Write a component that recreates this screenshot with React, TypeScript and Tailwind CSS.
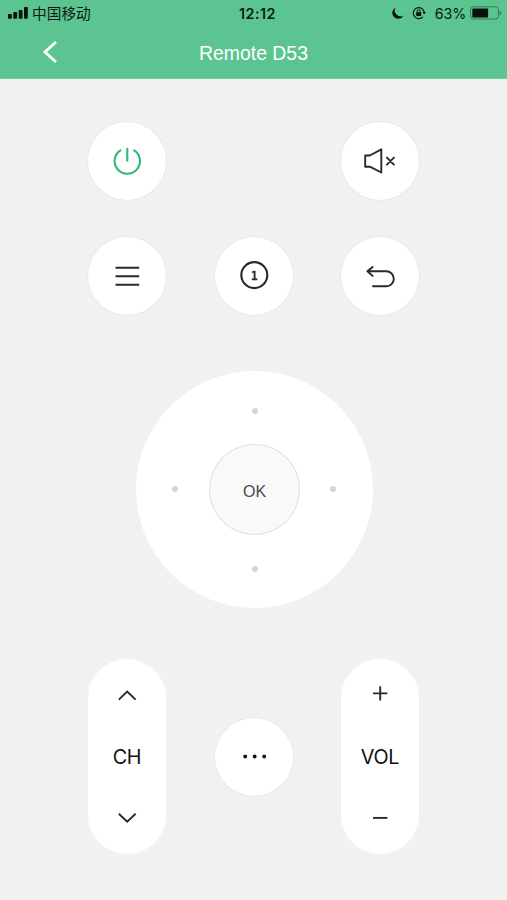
import React from 'react';

const ICON = {
  viewBox: '0 0 80 80',
  className: 'w-20 h-20 block',
  fill: 'none',
  stroke: '#29292b',
  strokeWidth: 1.9,
  strokeLinecap: 'round',
  strokeLinejoin: 'round',
} as const;

function RoundButton({ label, children }: { label: string; children: React.ReactNode }) {
  return (
    <button
      aria-label={label}
      className="w-20 h-20 shrink-0 rounded-full bg-white shadow-[inset_0_0_0_1px_#e7e7e7]"
    >
      {children}
    </button>
  );
}

function StatusBar() {
  return (
    <div className="grid grid-cols-3 items-center h-[27px] pl-2 pr-[5px] text-[#0b1a13]">
      <div className="flex items-center gap-1">
        <svg viewBox="0 0 20 14" className="w-5 h-[14px]" fill="#06130c">
          <rect x="0" y="8" width="3.8" height="4.8" rx="1" />
          <rect x="5.3" y="6" width="3.8" height="6.8" rx="1" />
          <rect x="10.7" y="4" width="3.8" height="8.8" rx="1" />
          <rect x="16" y="1" width="3.8" height="11.8" rx="1" />
        </svg>
        <span className="font-['Noto_Sans_CJK_SC',sans-serif] text-[14.7px] leading-none whitespace-nowrap">中国移动</span>
      </div>
      <span className="text-center pl-[5px] pt-[2px] font-['Inter',sans-serif] text-[14.3px] font-semibold leading-none tracking-[0.5px]">12:12</span>
      <div className="flex items-center justify-end">
        <svg viewBox="0 0 12 12" className="w-3 h-3 mr-2" fill="#06130c">
          <path d="M3.8.4A5.9 5.9 0 1 0 11.6 8.2 5.6 5.6 0 0 1 3.8.4Z" />
        </svg>
        <svg viewBox="0 0 14 14" className="w-[14px] h-[14px] mr-[9px]" fill="none" stroke="#06130c" strokeWidth="1.2">
          <path d="M10.8 10.9A5.5 5.5 0 1 1 12.2 6" />
          <path d="M10.5 6h3.3l-1.6 2.5Z" fill="#06130c" stroke="none" />
          <rect x="4.2" y="6.3" width="5" height="3.8" rx=".5" fill="#06130c" stroke="none" />
          <path d="M5.2 6.5V5.2a1.5 1.5 0 0 1 3 0v1.3" strokeWidth="1" />
        </svg>
        <span className="font-['Inter',sans-serif] text-[14.3px] leading-none pt-[2px] mr-1 tracking-[-0.2px]">63%</span>
        <svg viewBox="0 0 32 14" className="w-8 h-[14px] shrink-0" fill="none">
          <rect x=".6" y=".8" width="27.8" height="12.2" rx="3" stroke="#37785a" strokeWidth="1" />
          <rect x="2.3" y="2.4" width="15.8" height="9" rx="1" fill="#06130c" />
          <path d="M29.7 4.7c2.1.7 2.1 3.8 0 4.5Z" fill="#37785a" />
        </svg>
      </div>
    </div>
  );
}

function Header() {
  return (
    <header className="h-[79px] bg-[#5bc491] border-b border-[#75cba2]">
      <StatusBar />
      <div className="grid grid-cols-[80px_1fr_80px] items-center h-[51px] text-white">
        <button aria-label="Back" className="pl-[42px] pb-[2px]">
          <svg viewBox="0 0 16 24" className="w-4 h-6 block" fill="none" stroke="currentColor" strokeWidth="2.8">
            <path d="M14 2 2.9 12 14 22" />
          </svg>
        </button>
        <h1 className="text-center pt-[2px] font-['Liberation_Sans',sans-serif] text-[19.4px] leading-none">Remote D53</h1>
      </div>
    </header>
  );
}

function Dot() {
  return <span className="w-[6px] h-[6px] rounded-full bg-[#d5d5d5]" />;
}

function DirectionPad() {
  return (
    <div className="mt-[55px] ml-[49px] w-[237px] h-[237px] p-[36px] rounded-full bg-white grid grid-cols-[1fr_91px_1fr] grid-rows-[1fr_91px_1fr] items-center">
      <span />
      <div className="grid place-items-center pb-[30px]"><Dot /></div>
      <span />
      <div className="grid place-items-center pr-[31px] pb-[2px]"><Dot /></div>
      <button className="w-[91px] h-[91px] pt-[4px] rounded-full bg-[#f9f9f9] shadow-[inset_0_0_0_1px_#e2e2e2] font-['Liberation_Sans',sans-serif] text-[16px] text-[#4a4a4a]">
        OK
      </button>
      <div className="grid place-items-center pl-[29px] pb-[2px]"><Dot /></div>
      <span />
      <div className="grid place-items-center pt-[30px]"><Dot /></div>
      <span />
    </div>
  );
}

function Rocker({ label, up, down }: { label: string; up: string; down: string }) {
  return (
    <div className="w-20 h-[197px] rounded-full bg-white shadow-[inset_0_0_0_1px_#f1f1f1] flex flex-col items-center justify-between pt-[25px] pb-[25px]">
      <button aria-label={`${label} up`}>
        <svg viewBox="0 0 24 24" className="w-6 h-6 block" fill="none" stroke="#29292b" strokeWidth="1.9">
          <path d={up} />
        </svg>
      </button>
      <span className="font-['Inter',sans-serif] text-[19.8px] leading-6 tracking-[-0.3px] text-[#111]">{label}</span>
      <button aria-label={`${label} down`}>
        <svg viewBox="0 0 24 24" className="w-6 h-6 block" fill="none" stroke="#29292b" strokeWidth="1.9">
          <path d={down} />
        </svg>
      </button>
    </div>
  );
}

export default function App() {
  return (
    <div className="w-full h-[900px] overflow-hidden bg-[#f1f1f1]">
      <Header />
      <main className="px-[87px] pt-[42px]">
        <div className="flex justify-between">
          <RoundButton label="Power">
            <svg {...ICON} stroke="#2eb878" strokeWidth={2.1}>
              <path d="M33.5 29.3A12.7 12.7 0 1 0 47.1 29.3M40.3 27.8V39.8" />
            </svg>
          </RoundButton>
          <RoundButton label="Mute">
            <svg {...ICON}>
              <path d="M25.2 34.5H29.8L41.3 28.3V51.5L29.8 45.7H25.2ZM46.9 36.6l7 7M53.9 36.6l-7 7" />
            </svg>
          </RoundButton>
        </div>

        <div className="flex justify-between mt-[35px]">
          <RoundButton label="Menu">
            <svg {...ICON} strokeLinecap="butt">
              <path d="M28.5 31.7H52.2M28.5 40.2H52.2M28.5 48.7H52.2" />
            </svg>
          </RoundButton>
          <RoundButton label="Channel one">
            <svg {...ICON}>
              <circle cx="40.3" cy="39.1" r="13" strokeWidth="2.1" />
              <text
                x="37.1"
                y="43.7"
                textLength="6.6"
                lengthAdjust="spacingAndGlyphs"
                fill="#29292b"
                stroke="#29292b"
                strokeWidth="0.3"
                className="font-['DejaVu_Sans_Mono',monospace] text-[12.5px] font-bold"
              >
                1
              </text>
            </svg>
          </RoundButton>
          <RoundButton label="Return">
            <svg {...ICON}>
              <path d="M32.6 30.9 27.4 35.3 32.6 39.9M27.4 35.3H46.3A7.5 7.5 0 0 1 46.3 50.3H33" />
            </svg>
          </RoundButton>
        </div>

        <DirectionPad />

        <div className="flex justify-between items-center mt-[50px]">
          <Rocker label="CH" up="M3.8 16.6 12.2 8.6 20.6 16.6" down="M3.8 7.8 12.2 15.8 20.6 7.8" />
          <RoundButton label="More">
            <svg {...ICON} fill="#111" stroke="none">
              <circle cx="31.2" cy="39.5" r="1.9" />
              <circle cx="40.7" cy="39.5" r="1.9" />
              <circle cx="50.2" cy="39.5" r="1.9" />
            </svg>
          </RoundButton>
          <Rocker label="VOL" up="M5 10.4H19.4M12.2 3.3V17.5" down="M5 11.9H19.4" />
        </div>
      </main>
    </div>
  );
}
